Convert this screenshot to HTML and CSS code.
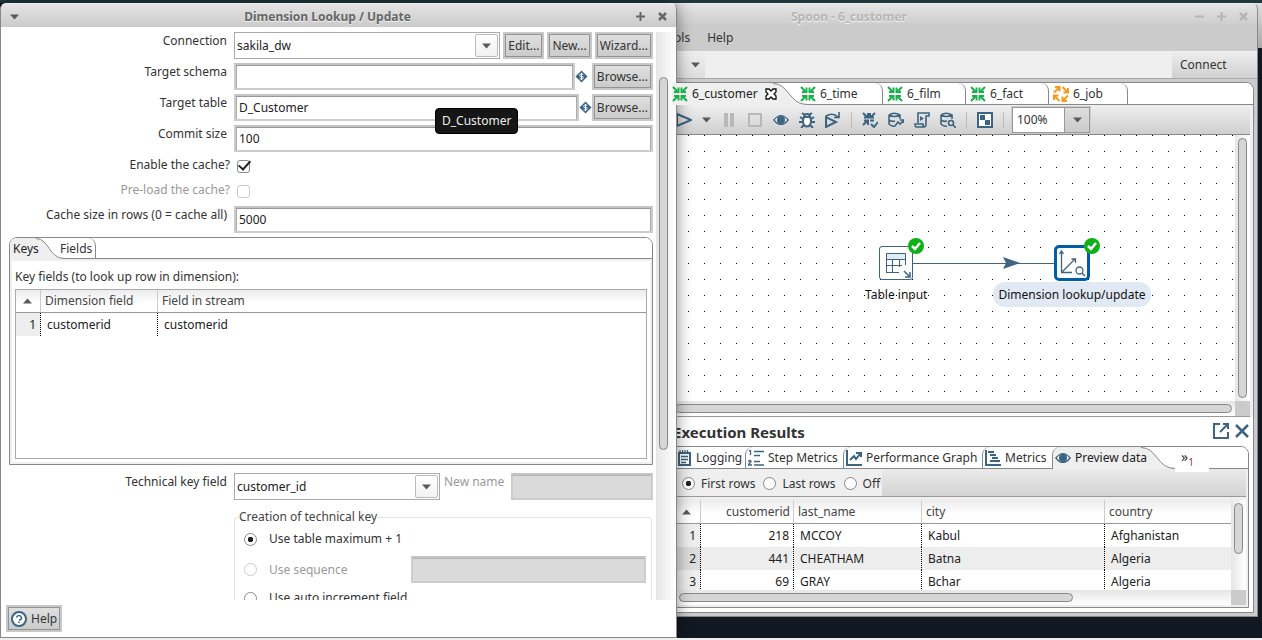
FILE: index.html
```html
<!DOCTYPE html>
<html lang="en">
<head>
<meta charset="utf-8">
<title>Spoon - 6_customer</title>
<link rel="stylesheet" href="styles.css">
</head>
<body>
<svg class="defs" aria-hidden="true">
  <symbol id="trans" viewBox="0 0 16 16"><g fill="none" stroke="currentColor" stroke-width="2"><path d="M1 1l5 5M15 1l-5 5M1 15l5-5M15 15l-5-5"/><path d="M2 6h4.500V1.500M14 6H9.500V1.500M2 10h4.500v4.500M14 10H9.500v4.500"/></g></symbol>
  <symbol id="job" viewBox="0 0 16 16"><path d="M1 6.500L6 1.500M9.500 1L14.500 6M15 9.500L10 14.500M6.500 15L1.500 10M2 1h4.500v4.500M15 2v4.500h-4.500M14 15H9.500v-4.500M1 14V9.500h4.500" fill="none" stroke="currentColor" stroke-width="2"/></symbol>
  <symbol id="eye" viewBox="0 0 18 14"><path d="M1 7Q9-3 17 7Q9 17 1 7z" fill="#fff" stroke="#3d6480" stroke-width="1.500"/><circle cx="9" cy="7" r="4.500" fill="#3d6480"/></symbol>
  <symbol id="down" viewBox="0 0 9 6"><path d="M0 0.500h9L4.500 5.500z" fill="#5a5a5a"/></symbol>
  <symbol id="up" viewBox="0 0 9 6"><path d="M0 5.500h9L4.500 0.500z" fill="#5a5a5a"/></symbol>
  <symbol id="dollar" viewBox="0 0 14 14"><path d="M7 0.500L13.500 7 7 13.500 0.500 7z" fill="#3d6480"/><path d="M9 4.500Q5 3.500 5 5.500T7 7T9 8.500T5 9.500M7 3v8" fill="none" stroke="#fff"/></symbol>
  <symbol id="check" viewBox="0 0 16 16"><circle cx="8" cy="8" r="8" fill="#0eb016"/><path d="M4 8l3 3 5-6" fill="none" stroke="#fff" stroke-width="2.500"/></symbol>
  <symbol id="curve" viewBox="0 0 34 22"><path d="M0 0C16 0 16 21.500 34 21.500V22H0z" fill="#efefef"/><path d="M0 .5C16 .5 16 21.500 34 21.500" fill="none" stroke="#888"/></symbol>
</svg>

<div class="behind"></div>

<main class="window spoon">
  <header class="titlebar inactive">
    <h1>Spoon - 6_customer</h1>
    <div class="winbtns">
      <svg width="9" height="9"><path d="M0 4.500h9" stroke="#b5b5b5" stroke-width="2"/></svg>
      <svg width="9" height="9"><path d="M0 4.500h9M4.500 0v9" stroke="#b5b5b5" stroke-width="2"/></svg>
      <svg width="9" height="9"><path d="M1 1l7 7M8 1l-7 7" stroke="#b5b5b5" stroke-width="2.500"/></svg>
    </div>
  </header>
  <nav class="menu"><a href="#">Tools</a><a href="#">Help</a></nav>
  <div class="topbar">
    <button class="layers" aria-label="Perspective"><svg width="12" height="14"><path d="M0 3h10M0 7h10M0 11h10" stroke="#3d6480" stroke-width="2"/></svg><svg width="9" height="6"><use href="#down"/></svg></button>
    <button class="connect">Connect</button>
  </div>
  <section class="inner">
    <div class="tabs">
      <button class="tab sel first"><svg class="green" width="16" height="16"><use href="#trans"/></svg>6_customer<svg class="close" width="12" height="12"><path d="M1 1h3l2 2 2-2h3v3L9 6l2 2v3H8L6 9l-2 2H1V8l2-2-2-2z" fill="#fff" stroke="#111" stroke-width="1.300"/></svg></button>
      <svg class="curve" width="34" height="22"><use href="#curve"/></svg>
      <button class="tab t-time"><svg class="green" width="16" height="16"><use href="#trans"/></svg>6_time</button>
      <button class="tab t-film"><svg class="green" width="16" height="16"><use href="#trans"/></svg>6_film</button>
      <button class="tab t-film"><svg class="green" width="16" height="16"><use href="#trans"/></svg>6_fact</button>
      <button class="tab t-job"><svg class="orange" width="16" height="16"><use href="#job"/></svg>6_job</button>
    </div>
    <div class="toolbar">
      <button aria-label="Run"><svg viewBox="0 0 16 16"><path d="M1 2l14 6-14 6z" class="ln"/></svg></button>
      <button aria-label="Run options"><svg viewBox="0 0 9 6" class="small"><use href="#down"/></svg></button>
      <button aria-label="Pause"><svg viewBox="0 0 16 16"><path d="M3 1h4v14H3zM9 1h4v14H9z" fill="#b8b8b8"/></svg></button>
      <button aria-label="Stop"><svg viewBox="0 0 16 16"><path d="M2 2h12v12H2z" fill="none" stroke="#b8b8b8" stroke-width="2"/></svg></button>
      <button aria-label="Preview"><svg viewBox="0 0 18 14"><use href="#eye" width="18" height="14"/></svg></button>
      <button aria-label="Debug"><svg viewBox="0 0 16 16"><path d="M5 5h6q2 4 0 8-3 3-6 0-2-4 0-8z" fill="#fff" stroke="#3d6480" stroke-width="2"/><path d="M5 5q0-3 3-3t3 3zM3 1l3 2M13 1l-3 2M4 7L1 5M12 7l3-2M4 10H0M12 10h4M5 13l-3 3M11 13l3 3" class="ln"/></svg></button>
      <button aria-label="Replay"><svg viewBox="0 0 16 16"><path d="M1 5v10l10-5z" class="ln"/><path d="M1 4q7-4 12 1M14 0v5.500H9" class="ln thin"/></svg></button>
      <i class="sep"></i>
      <button aria-label="Verify"><svg viewBox="0 0 16 16"><path d="M1 1l4 4M13 1L9 5M1 13l4-4M2 5.500h4V1M12 5.500H8V1M2 8.500h4V13M8 8.500h4M9 12l3 3 4-5" class="ln"/></svg></button>
      <button aria-label="Impact"><svg viewBox="0 0 16 16"><path d="M1 3v9q3 3 6 2M1 3q5-3.500 11 0v4M1 3q5 3 11 0M1 8q3 2 6 1M7 14l3-4 2 2 4-4M12 8h3.500v3" class="ln thin"/></svg></button>
      <button aria-label="SQL"><svg viewBox="0 0 16 16"><path d="M4 11V1h11v3h-3v8q0 3-2 3H2q-1 0-1-3h8q0 3 2 3" class="ln thin"/><path d="M6 4l4 2.500L6 9z" fill="#3d6480"/></svg></button>
      <button aria-label="Explore database"><svg viewBox="0 0 16 16"><path d="M1 3v9q3 3 6 2M1 3q5-3.500 11 0v4M1 3q5 3 11 0M1 8q3 2 6 1" class="ln thin"/><circle cx="11" cy="11" r="2.500" class="ln thin"/><path d="M13 13l3 3" class="ln thin"/></svg></button>
      <i class="sep"></i>
      <button aria-label="Show results"><svg viewBox="0 0 16 16"><path d="M1 1h14v14H1z" fill="#fff" stroke="#3d6480" stroke-width="2"/><path d="M3 3h5v5H3zM8 8h5v5H8z" fill="#3d6480"/></svg></button>
      <i class="sep"></i>
      <div class="zoom"><input value="100%" aria-label="Zoom"><button aria-label="Zoom levels"><svg viewBox="0 0 9 6" class="small"><use href="#down"/></svg></button></div>
    </div>
    <div class="canvas-wrap">
      <div class="canvas">
        <svg class="hop" width="142" height="12"><path d="M0 6.500h142" stroke="#3d6480"/><path d="M90 0l17 6-17 6 3-6z" fill="#3d6480"/></svg>
        <div class="node n1">
          <div class="box"><svg width="32" height="32"><path d="M6 6h20v6H6z" fill="#dfecf4"/><path d="M6.500 25.500v-19h19V18M6 12.500h20M12.500 12v13M19.500 12v8M6 18.500h16M6 25.500h13" fill="none" stroke="#3d6480"/><path d="M24 24l5 5M30 25v5h-5" fill="none" stroke="#3d6480" stroke-width="1.500"/></svg><svg class="ok" width="16" height="16"><use href="#check"/></svg></div>
          <span>Table input</span>
        </div>
        <div class="node n2">
          <div class="box"><svg width="30" height="30"><path d="M4.500 3v21.500H15M4.500 24.500L18 11M2.500 6l2-3 2 3M14.500 11H18.500v4" fill="none" stroke="#3d6480" stroke-width="1.300"/><circle cx="22.500" cy="22.500" r="3.500" fill="none" stroke="#3d6480" stroke-width="1.300"/><path d="M25 25l3 3" stroke="#3d6480" stroke-width="1.500"/></svg><svg class="ok" width="16" height="16"><use href="#check"/></svg></div>
          <span>Dimension lookup/update</span>
        </div>
      </div>
      <div class="vbar"><i></i></div>
      <div class="hbar"><i></i></div>
      <div class="corner"></div>
    </div>
    <div class="results">
      <div class="rhead"><h2>Execution Results</h2>
        <button aria-label="Detach"><svg width="16" height="16"><path d="M7 1H1v14h14V9M10 1h5v5M15 1L7 9" fill="none" stroke="#3d6480" stroke-width="2"/></svg></button>
        <button aria-label="Close"><svg width="14" height="14"><path d="M1 1l12 12M13 1L1 13" stroke="#3d6480" stroke-width="2.500"/></svg></button>
      </div>
      <div class="folder">
        <div class="tabs rtabs">
          <button class="tab r1"><svg width="16" height="16"><path d="M3 3h11v12H3z" fill="#fff" stroke="#3d6480" stroke-width="2"/><path d="M5 6.500h7M5 9.500h7M5 12.500h5M4 0v3M6.500 0v3M9 0v3M11.500 0v3" stroke="#3d6480" stroke-width="1.300"/></svg>Logging</button>
          <button class="tab r2"><svg width="16" height="16"><path d="M6 1.500h10M6 5.500h6M6 11.500h6M6 15h10M1 1l1.500-1v5M0 11.500q3-2 3 0L0 15h4" fill="none" stroke="#3d6480" stroke-width="1.300"/></svg>Step Metrics</button>
          <button class="tab r3"><svg width="16" height="16"><path d="M1 0v15h15" fill="none" stroke="#3d6480" stroke-width="2"/><path d="M4 10l4-4 2 3 4-5M10 3h5v4" fill="none" stroke="#3d6480" stroke-width="2"/></svg>Performance Graph</button>
          <button class="tab r4"><svg width="16" height="16"><path d="M1 0v15h15M3 2h6M5 5h6M7 8h6M5 11h10" fill="none" stroke="#3d6480" stroke-width="2"/></svg>Metrics</button>
          <button class="tab r5 sel"><svg width="16" height="14"><use href="#eye"/></svg>Preview data</button>
          <svg class="curve" width="34" height="22"><use href="#curve"/></svg>
          <button class="more">»<sub>1</sub></button>
        </div>
        <div class="radios">
          <div class="opts">
            <label><input type="radio" name="rows" checked>First rows</label>
            <label><input type="radio" name="rows">Last rows</label>
            <label><input type="radio" name="rows">Off</label>
          </div>
        </div>
        <div class="grid-wrap">
          <div class="data">
            <table>
              <colgroup><col class="c-num"><col class="c-id"><col class="c-name"><col class="c-city"><col></colgroup>
              <thead><tr><th class="num"><svg width="9" height="6"><use href="#up"/></svg></th><th class="right">customerid</th><th>last_name</th><th>city</th><th>country</th></tr></thead>
              <tbody>
                <tr><td class="num">1</td><td class="right">218</td><td>MCCOY</td><td>Kabul</td><td>Afghanistan</td></tr>
                <tr><td class="num">2</td><td class="right">441</td><td>CHEATHAM</td><td>Batna</td><td>Algeria</td></tr>
                <tr><td class="num">3</td><td class="right">69</td><td>GRAY</td><td>Bchar</td><td>Algeria</td></tr>
              </tbody>
            </table>
          </div>
          <div class="vbar"><i></i></div>
          <div class="hbar"><i></i></div>
          <div class="corner"></div>
        </div>
      </div>
    </div>
  </section>
</main>

<section class="window dialog">
  <header class="titlebar">
    <svg class="wm" width="9" height="6"><use href="#down"/></svg>
    <h1>Dimension Lookup / Update</h1>
    <div class="winbtns">
      <svg width="9" height="9"><path d="M0 4.500h9M4.500 0v9" stroke="#666" stroke-width="2"/></svg>
      <svg width="9" height="9"><path d="M1 1l7 7M8 1l-7 7" stroke="#666" stroke-width="2.500"/></svg>
    </div>
  </header>
  <div class="scroll">
    <form class="form">
      <div class="row"><label for="conn">Connection</label><div class="field gap">
        <div class="combo grow"><select id="conn"><option>sakila_dw</option></select><b><svg width="9" height="6"><use href="#down"/></svg></b></div>
        <button type="button" class="btn">Edit...</button><button type="button" class="btn">New...</button><button type="button" class="btn">Wizard...</button></div></div>
      <div class="row"><label for="schema">Target schema</label><div class="field">
        <input class="text grow" id="schema"><svg class="var wide" width="13" height="13"><use href="#dollar"/></svg><button type="button" class="btn">Browse...</button></div></div>
      <div class="row"><label for="table">Target table</label><div class="field">
        <input class="text grow" id="table" value="D_Customer"><svg class="var" width="13" height="13"><use href="#dollar"/></svg><button type="button" class="btn">Browse...</button></div></div>
      <div class="row"><label for="commit">Commit size</label><input class="text" id="commit" value="100"></div>
      <div class="row tick"><label for="cache">Enable the cache?</label><input type="checkbox" id="cache" checked></div>
      <div class="row tick"><label class="dim" for="preload">Pre-load the cache?</label><input type="checkbox" id="preload" disabled></div>
      <div class="row"><label for="csize">Cache size in rows (0 = cache all)</label><input class="text" id="csize" value="5000"></div>

      <div class="keys">
        <div class="tabs ktabs"><button type="button" class="tab sel k1">Keys</button><svg class="curve" width="28" height="21" viewBox="0 0 28 21"><path d="M0 0C13 0 13 20.500 28 20.500V21H0z" fill="#efefef"/><path d="M0 .5C13 .5 13 20.500 28 20.500" fill="none" stroke="#888"/></svg><button type="button" class="tab k2">Fields</button></div>
        <div class="kbody">
          <p>Key fields (to look up row in dimension):</p>
          <div class="ktable">
            <table>
              <colgroup><col class="k-num"><col class="k-dim"><col></colgroup>
              <thead><tr><th class="num"><svg width="9" height="6"><use href="#up"/></svg></th><th>Dimension field</th><th>Field in stream</th></tr></thead>
              <tbody><tr><td class="num">1</td><td>customerid</td><td>customerid</td></tr></tbody>
            </table>
          </div>
        </div>
      </div>

      <div class="row"><label for="tk">Technical key field</label><div class="field top">
        <div class="combo tk"><select id="tk"><option>customer_id</option></select><b><svg width="9" height="6"><use href="#down"/></svg></b></div>
        <label class="dim newname" for="nn">New name</label><input class="text grow" id="nn" disabled></div></div>
      <fieldset>
        <legend>Creation of technical key</legend>
        <label class="pick"><input type="radio" name="key" checked>Use table maximum + 1</label>
        <div class="seq"><label class="pick dim"><input type="radio" name="key" disabled>Use sequence</label><input class="text" aria-label="Sequence" disabled></div>
        <label class="pick"><input type="radio" name="key">Use auto increment field</label>
      </fieldset>
    </form>
    <div class="vbar"><i></i></div>
  </div>
  <footer><button class="btn help"><svg width="16" height="16"><circle cx="8" cy="8" r="7" fill="#fff" stroke="#3d6480" stroke-width="2"/><path d="M5.500 6.500Q6 4.500 8 4.500T10.500 6.500T8 9M8 10.500v1.500" fill="none" stroke="#3d6480" stroke-width="1.500"/></svg>Help</button></footer>
  <div class="tooltip" role="tooltip">D_Customer</div>
</section>
</body>
</html>
```
FILE: styles.css
```css
* { box-sizing: border-box; }
html, body { height: 100%; }
body {
  margin: 0; position: relative; overflow: hidden;
  background: linear-gradient(#22373d 3px, #121822 3px);
  border-bottom: 2px solid #efefef;
  font: 12px/18px "Noto Sans", sans-serif; color: #333;
}
button, input, select { font: inherit; color: inherit; margin: 0; }
button { background: none; border: 0; padding: 0; }
svg { display: block; flex: none; }
h1, h2, p { margin: 0; }
.defs { position: absolute; width: 0; height: 0; }
.behind { position: absolute; right: 0; top: 3px; width: 16px; height: 45px; background: linear-gradient(#ddd, #aaa); }

.window { position: absolute; display: flex; flex-direction: column; border: 1px solid #888; border-top-color: #eee; border-radius: 6px 6px 0 0; }
.spoon { left: 666px; right: 4px; top: 3px; bottom: 21px; background: #cbcbcb; }
.dialog { left: 0; width: 677px; top: 3px; bottom: 0; background: #fff; box-shadow: 0 0 16px rgba(0,0,0,.45); }

.titlebar { display: flex; align-items: center; height: 23px; padding: 2px 9px 0; background: linear-gradient(#e4e4e4, #cbcbcb); border-radius: 5px 5px 0 0; }
.titlebar h1 { flex: 1; font-size: 12px; font-weight: 700; text-align: center; color: #666; text-shadow: 0 1px #f4f4f4; }
.titlebar.inactive h1 { color: #b5b5b5; text-align: left; padding-left: 115px; }
.winbtns { display: flex; gap: 13px; }

.menu { display: flex; gap: 17px; height: 24px; padding-top: 2px; }
.menu a { color: #333; text-decoration: none; }
.menu a:first-child { margin-left: -6px; }
.topbar { display: flex; justify-content: space-between; height: 28px; background: #efefef; border-bottom: 1px solid #aaa; }
.layers { display: flex; align-items: center; gap: 12px; width: 38px; background: linear-gradient(#efefef, #ddd); }
.connect { width: 85px; padding-left: 8px; text-align: left; background: linear-gradient(#efefef, #d0d0d0); }

.inner { flex: 1; min-height: 0; display: flex; flex-direction: column; margin: 3px 3px 3px 4px; border: 1px solid #888; border-radius: 0 8px 0 0; background: #efefef; overflow: hidden; }
.tabs { display: flex; height: 22px; background: #fff; box-shadow: inset 0 -1px #888; }
.tab { display: flex; align-items: center; gap: 4px; border-right: 1px solid #888; border-radius: 0 8px 0 0; white-space: nowrap; flex: none; }
.tab.sel { border-right: 0; background: #efefef; border-radius: 0; color: #222; position: relative; z-index: 1; }
.green { color: #1ab04c; } .orange { color: #f59a1f; }
.first { width: 101px; }
.first .close { margin-left: 3px; }
.inner > .tabs .curve { margin-right: -7px; }
.t-time { width: 83px; } .t-film { width: 83px; padding-left: 4px; } .t-job { width: 79px; padding-left: 4px; }

.toolbar { display: flex; align-items: center; gap: 10px; height: 30px; padding-left: 4px; margin-right: 3px; background: linear-gradient(#efefef, #cfcfcf); border-bottom: 1px solid #888; }
.toolbar button svg { width: 16px; height: 16px; }
.toolbar button svg.small { width: 9px; height: 6px; }
.ln { fill: none; stroke: #3d6480; stroke-width: 2; }
.ln.thin { stroke-width: 1.6px; }
.sep { width: 1px; height: 16px; background: #bbb; }
.zoom { display: flex; width: 78px; height: 26px; margin-left: -2px; border: 1px solid #999; outline: 1px solid #ccc; }
.zoom input { width: 51px; min-width: 0; border: 0; padding: 0 4px; background: #fff; }
.zoom button { flex: 1; display: grid; place-items: center; border-left: 1px solid #999; background: linear-gradient(#dedede, #cacaca); }

.canvas-wrap { flex: 1; min-height: 0; display: grid; grid-template: 1fr 15px / 1fr 15px; margin-right: 3px; border-bottom: 1px solid #999; }
.canvas { position: relative; background: conic-gradient(from 270deg at 1px 1px, #000 90deg, transparent 0) 0 0 / 16px 16px #fff; color: #111; }
.hop { position: absolute; left: 241px; top: 122px; }
.node { position: absolute; display: flex; flex-direction: column; align-items: center; }
.node span { padding: 4px 8px; line-height: 17px; white-space: nowrap; }
.n1 { left: 185px; top: 111px; } .n2 { left: 321px; top: 110px; width: 158px; }
.box { position: relative; width: 34px; height: 34px; border: 1px solid #3d6480; border-radius: 3px; background: #fff; margin-bottom: 2px; }
.n2 .box { width: 36px; height: 36px; border: 3px solid #005da6; border-radius: 5px; margin-bottom: 1px; }
.n2 span { width: 100%; padding: 4px 0; text-align: center; background: #e1eaf4; border-radius: 12px; }
.ok { position: absolute; right: -12px; top: -9px; }
.n2 .ok { right: -13px; top: -10px; }

.vbar { background: linear-gradient(90deg, #e6e6e6, #fff); padding: 3px; }
.hbar { background: linear-gradient(#e6e6e6, #fff); padding: 3px; }
.vbar i, .hbar i { display: block; width: 9px; height: 9px; border: 1px solid #888; border-radius: 5px; background: #d6d6d6; }
.corner { background: #cbcbcb; }
.canvas-wrap .vbar i { height: 100%; }
.canvas-wrap .hbar i { width: 100%; }

.results { height: 195px; padding: 0 4px 4px 1px; background: #fff; display: flex; flex-direction: column; }
.rhead { display: flex; align-items: center; gap: 6px; height: 29px; }
.rhead h2 { flex: 1; padding-top: 2px; font-size: 15px; line-height: 27px; color: #333; }
.rhead button { padding-bottom: 2px; }
.folder { flex: 1; min-height: 0; display: flex; flex-direction: column; border: 1px solid #888; border-radius: 0 8px 0 0; background: #efefef; padding: 0 2px 2px 0; overflow: hidden; }
.rtabs { margin-right: -2px; position: relative; }
.rtabs .tab { border-right: 0; border-left: 1px solid #888; border-radius: 8px 0 0 0; padding-left: 2px; }
.r1 { width: 71px; } .r2 { width: 98px; } .r3 { width: 139px; } .r4 { width: 70px; } .r5 { width: 89px; }
.rtabs .r1 { border-left: 0; }
.more { width: 34px; height: 25px; background: #fff; text-align: left; padding-left: 6px; color: #333; font-size: 14px; line-height: 12px; z-index: 1; }
.more sub { font-size: 10px; color: #844; }
.radios { height: 28px; background: linear-gradient(#eaeaea, #d4d4d4); border-bottom: 1px solid #999; }
.opts { display: flex; align-items: center; gap: 8px; height: 27px; width: 208px; padding: 2px 0 0 8px; background: #efefef; }
.opts label { display: flex; align-items: center; gap: 6px; white-space: nowrap; }
input[type=radio], input[type=checkbox] { appearance: none; flex: none; width: 13px; height: 13px; border: 1px solid #888; border-radius: 50%; background: #fff; }
input[type=radio]:checked { background: radial-gradient(circle, #222 2.5px, #fff 3px); }
input[type]:disabled { border-color: #ccc; }

.grid-wrap { flex: 1; min-height: 0; display: grid; grid-template: 1fr 15px / 1fr 15px; margin-top: 3px; }
.data { min-height: 0; overflow: hidden; background: #fff; }
table { width: 100%; border-collapse: separate; border-spacing: 0; table-layout: fixed; }
th, td { height: 23px; padding: 0 6px; text-align: left; font-weight: 400; line-height: 18px; }
th { height: 24px; padding: 0 4px; border-right: 1px solid #ccc; border-bottom: 1px solid #999; background: linear-gradient(#ececec, #fff 60%); color: #444; }
td { border-right: 1px dotted #000; color: #222; }
th:last-child, td:last-child { border-right: 0; }
th.right { text-align: right; padding-right: 3px; } td.right { text-align: right; padding-right: 4px; }
td.num { text-align: right; padding: 0 4px; background: #eee; }
th.num svg { margin-left: 4px; }
tbody tr:nth-child(even) td { background: #ededed; }
tbody tr:nth-child(even) td.num { background: #dcdcdc; }
.c-num { width: 27px; } .c-id { width: 93px; } .c-name { width: 128px; } .c-city { width: 183px; }
.grid-wrap .vbar i { height: 51px; }
.grid-wrap .hbar { padding-left: 5px; }
.grid-wrap .hbar i { width: 394px; }

.scroll { flex: 1; min-height: 0; display: flex; overflow: hidden; margin-top: 5px; }
.form { flex: 1; padding-right: 3px; display: flex; flex-direction: column; gap: 4px; }
.scroll .vbar { width: 20px; padding-top: 45px; }
.scroll .vbar i { height: 373px; }
.row { display: grid; grid-template-columns: 226px 1fr; column-gap: 7px; flex: none; align-items: start; }
.row > label { text-align: right; }
.row.tick { grid-template-columns: 229px 13px; column-gap: 7px; height: 21px; }
.tick input { margin-top: 4px; border-radius: 3px; }
#cache { position: relative; }
#cache::after { content: ""; position: absolute; left: 3px; top: -3px; width: 5px; height: 10px; border: solid #222; border-width: 0 2px 2px 0; transform: rotate(42deg); }
.field { display: flex; align-items: center; min-width: 0; }
.field.gap { gap: 3px; } .field.top { align-items: flex-start; }
.grow { flex: 1; min-width: 0; }
.text { width: 100%; height: 27px; padding: 0 3px; border: 2px solid #ccc; border-top-color: #c4c4c4; box-shadow: inset 0 1px #999, inset -1px 0 #aaa, inset 1px 0 #aaa; background: #fff; color: #222; }
.text:disabled { background: #dadada; box-shadow: inset 0 1px #b4b4b4; }
.field .text { width: auto; }
.combo { position: relative; display: flex; height: 27px; border: 1px solid #aaa; background: #fff; }
.combo select { appearance: none; flex: 1; min-width: 0; border: 0; background: none; padding: 0 2px; color: #222; }
.combo b { display: grid; place-items: center; width: 23px; height: 23px; margin: 1px; border: 1px solid #bbb; border-radius: 2px; background: linear-gradient(#fff, #f2f2f2); pointer-events: none; }
.btn { height: 27px; padding: 0 3px; border: 2px solid #c8c8c8; box-shadow: inset 0 0 0 1px #939393; background: linear-gradient(#e0e0e0, #cacaca); white-space: nowrap; }
.var.wide { margin-right: 4px; }
.dim { color: #999; }

.keys { display: flex; flex-direction: column; flex: none; height: 228px; margin: 0 0 4px 8px; border: 1px solid #888; border-radius: 8px 8px 0 0; overflow: hidden; }
.keys .k1 { padding-left: 3px; width: 26px; }
.k2 { padding: 0 3px; margin-left: -7px; z-index: 1; }
.keys .tabs { height: 21px; }
.kbody { flex: 1; display: flex; flex-direction: column; padding: 7px 3px 3px; border: 2px solid #efefef; }
.kbody p { height: 21px; }
.ktable { flex: 1; border: 1px solid #aaa; }
.k-num { width: 25px; } .k-dim { width: 117px; }
.ktable th { height: 23px; }
.ktable th.num svg { margin-left: 3px; }
.tk { width: 206px; }
.newname { margin: 0 7px 0 4px; }
fieldset { margin: 4px 1px 0 233px; padding: 4px 5px 0 9px; border: 1px solid #e4e4e4; border-radius: 3px; min-width: 0; }
legend { margin-left: -5px; padding: 0; color: #444; }
.pick { display: flex; align-items: center; gap: 12px; }
.seq { display: flex; align-items: center; justify-content: space-between; margin: 8px 0 6px; }
.seq .text { width: 235px; }
footer { height: 37px; padding: 5px 0 0 5px; }
.help { display: flex; align-items: center; gap: 4px; }
.tooltip { position: absolute; left: 434px; top: 104px; padding: 3px 6px 4px; border: 1px solid #000; border-radius: 4px; background: #161616; color: #eee; line-height: 17px; }
```
